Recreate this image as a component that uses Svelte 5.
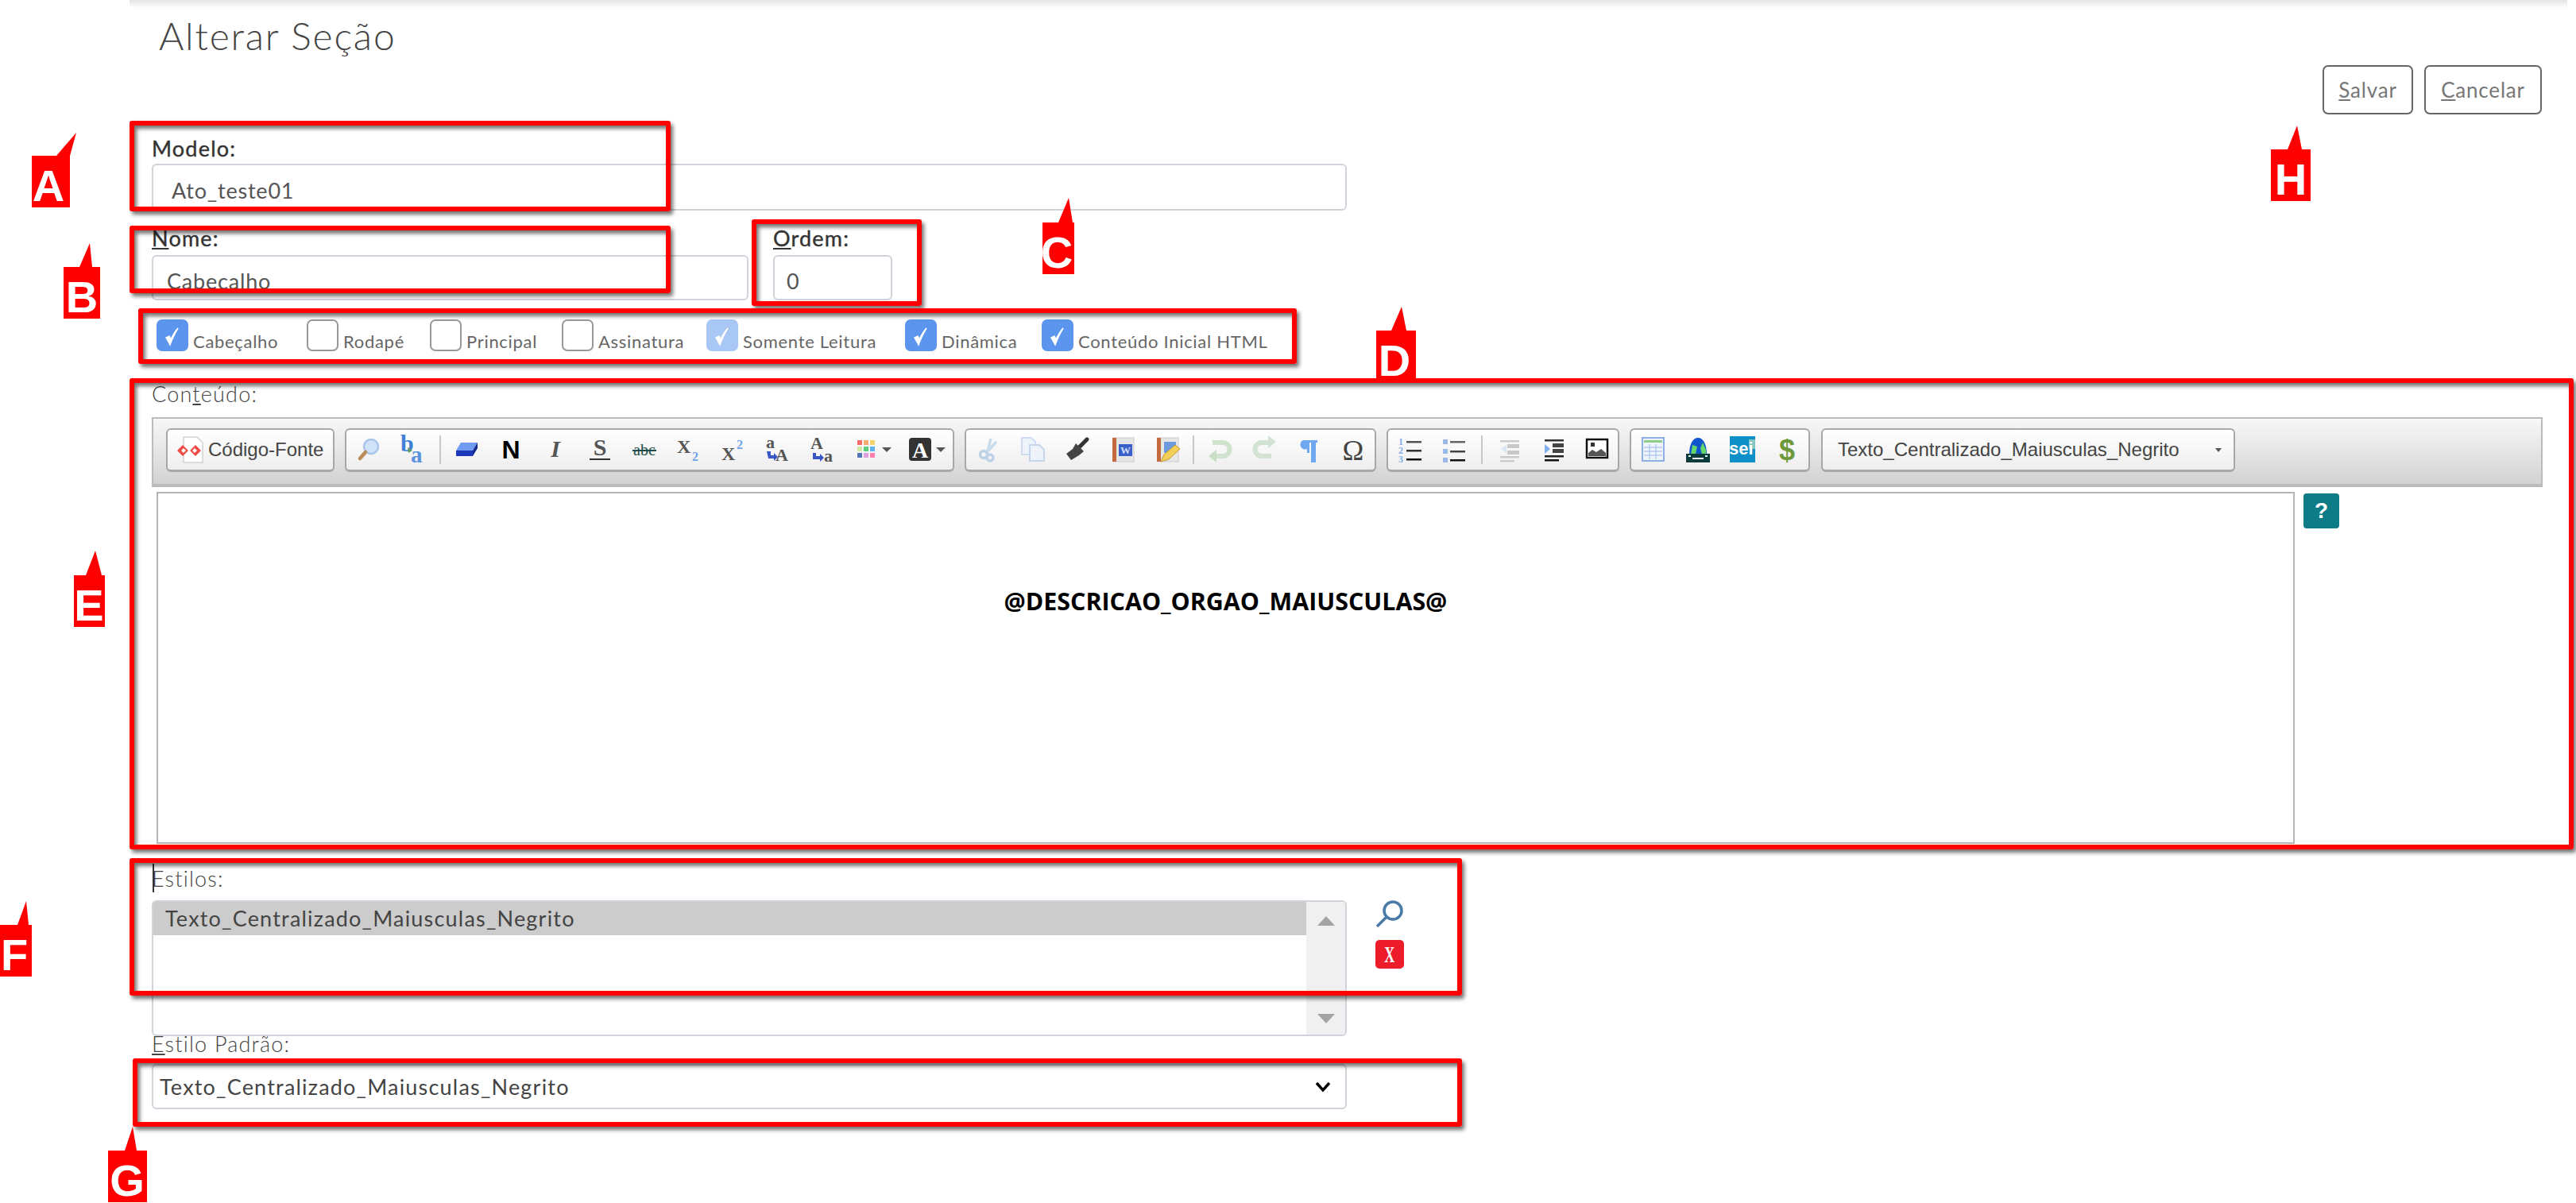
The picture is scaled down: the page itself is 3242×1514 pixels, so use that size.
<script>
  const serif = `font-family="Liberation Serif, serif"`
  const bold = `${serif} font-weight="700"`

  const ICONS = {
    search: `<circle cx="21" cy="14" r="9" fill="#cfe2f8" stroke="#a9c6ea" stroke-width="2.5"/><path d="M14 21 7 29" stroke="#b98d5a" stroke-width="4.5" stroke-linecap="round"/>`,
    replace: `<text x="2" y="20" font-size="30" fill="#3f7fd6" ${bold}>b</text><text x="15" y="34" font-size="29" fill="#5b93dd" ${bold}>a</text><path d="M11 15l6 4-5 3z" fill="#5e9e5a"/>`,
    eraser: `<path d="M11 9H32L26 19H5z" fill="#6f9cf0"/><path d="M5 19H26V26H5z" fill="#1c37b8"/><path d="M26 19 32 9V16L26 26z" fill="#12288f"/>`,
    bold: `<text x="18" y="29" text-anchor="middle" font-size="32" fill="#000" font-family="Liberation Sans, sans-serif" font-weight="700">N</text>`,
    italic: `<text x="18" y="27" text-anchor="middle" font-size="30" font-style="italic" fill="#555" ${bold}>I</text>`,
    underline: `<text x="18" y="25" text-anchor="middle" font-size="30" fill="#555" ${bold}>S</text><rect x="5" y="29" width="26" height="2" fill="#333"/>`,
    strike: `<text x="18" y="25" text-anchor="middle" font-size="20" fill="#1e4d4b" ${serif}>abc</text><rect x="3" y="18" width="30" height="2" fill="#1e4d4b"/>`,
    sub: `<text x="3" y="22" font-size="24" fill="#555" ${bold}>X</text><text x="22" y="32" font-size="16" fill="#6fa5e8" ${bold}>2</text>`,
    sup: `<text x="3" y="31" font-size="24" fill="#555" ${bold}>X</text><text x="22" y="17" font-size="16" fill="#6fa5e8" ${bold}>2</text>`,
    lower: `<text x="3" y="16" font-size="22" fill="#555" ${bold}>a</text><text x="15" y="32" font-size="22" fill="#555" ${bold}>A</text><path d="M4 20h5v5h4v-3l5 5-5 5v-3H6z" fill="#3a57c8"/>`,
    upper: `<text x="3" y="17" font-size="22" fill="#555" ${bold}>A</text><text x="20" y="33" font-size="22" fill="#555" ${bold}>a</text><path d="M6 22h4v4h5v-3l5 5-5 5v-3H6z" fill="#3a57c8"/>`,
    colors: `<g><rect x="7" y="6" width="6" height="6" fill="#f76a6a"/><rect x="15" y="6" width="6" height="6" fill="#f9aa72"/><rect x="23" y="6" width="6" height="6" fill="#f3d56b"/><rect x="7" y="14" width="6" height="6" fill="#cfe8a8"/><rect x="15" y="14" width="6" height="6" fill="#5ccf7a"/><rect x="23" y="14" width="6" height="6" fill="#5fb3ee"/><rect x="7" y="22" width="6" height="6" fill="#5577b5"/><rect x="15" y="22" width="6" height="6" fill="#dda0dd"/><rect x="23" y="22" width="6" height="6" fill="#ff7eb0"/></g>`,
    abox: `<rect x="4" y="3" width="28" height="29" rx="4" fill="#333"/><text x="18" y="28" text-anchor="middle" font-size="28" fill="#fff" ${bold}>A</text>`,
    scissors: `<path d="M21 4 17 20M28 8 17 20" stroke="#c9dcec" stroke-width="3.5" fill="none"/><circle cx="12" cy="24" r="4.5" fill="none" stroke="#bcd2e6" stroke-width="3.5"/><circle cx="20" cy="28" r="4" fill="none" stroke="#bcd2e6" stroke-width="3.5"/>`,
    copy: `<path d="M4 3h12l5 5v16H4z" fill="#eef3fa" stroke="#cfdcf0" stroke-width="2"/><path d="M14 12h12l6 6v14H14z" fill="#eef3fa" stroke="#c5d5ec" stroke-width="2"/>`,
    brush: `<path d="M21 14 30 5" stroke="#333" stroke-width="5" stroke-linecap="round"/><path d="M16 10 26 20 20 25 10 31 4 23 12 17z" fill="#444"/>`,
    word: `<rect x="7" y="3" width="26" height="30" fill="#e6e6e6" stroke="#ccc"/><rect x="6" y="3" width="5" height="30" fill="#c46a3c"/><rect x="14" y="11" width="17" height="15" fill="#3a5fc8"/><text x="22.5" y="23" text-anchor="middle" font-size="13" fill="#cfe0ff" ${bold}>W</text>`,
    wordedit: `<rect x="7" y="3" width="26" height="30" fill="#e6e6e6" stroke="#ccc"/><rect x="6" y="3" width="5" height="30" fill="#c46a3c"/><rect x="15" y="8" width="15" height="14" fill="#6d9be0"/><path d="M11 33 15 24 29 12 35 17 21 30z" fill="#f3cf57" stroke="#c99a33"/>`,
    undo: `<path d="M9 9h13a8 8 0 0 1 0 17H12" fill="none" stroke="#cfe3cf" stroke-width="6"/><path d="M14 18 4 26l10 8z" fill="#c7dec7"/>`,
    redo: `<path d="M27 9H15a8 8 0 0 0 0 17h12" fill="none" stroke="#d3e3d3" stroke-width="6"/><path d="M23 0l10 8-10 8z" fill="#d3e3d3"/>`,
    pilcrow: `<path d="M11 6h18v3h-2v25h-6V9h-2v13h-3v-5a5.5 5.5 0 0 1-5-11z" fill="#6fa8ef"/>`,
    omega: `<text x="18" y="31" text-anchor="middle" font-size="36" fill="#444" ${serif}>Ω</text>`,
    ol: `<text x="3" y="12" font-size="12" fill="#86aeea" ${bold}>1</text><text x="3" y="23" font-size="12" fill="#86aeea" ${bold}>2</text><text x="3" y="34" font-size="12" fill="#86aeea" ${bold}>3</text><rect x="13" y="7" width="19" height="2.5" fill="#555"/><rect x="13" y="18" width="19" height="2.5" fill="#333"/><rect x="13" y="29" width="19" height="2.5" fill="#111"/>`,
    ul: `<rect x="3" y="5" width="6" height="6" fill="#9bb8e8"/><rect x="3" y="17" width="6" height="6" fill="#9bb8e8"/><rect x="3" y="28" width="6" height="6" fill="#9bb8e8"/><rect x="12" y="7" width="19" height="2.5" fill="#666"/><rect x="12" y="19" width="19" height="2.5" fill="#444"/><rect x="12" y="30" width="19" height="2.5" fill="#111"/>`,
    outdent: `<rect x="8" y="6" width="24" height="2.5" fill="#ccc"/><rect x="17" y="11" width="15" height="5" fill="#c8c8c8"/><rect x="17" y="19" width="15" height="5" fill="#c8c8c8"/><rect x="8" y="26" width="24" height="2.5" fill="#ccc"/><rect x="8" y="31" width="18" height="2.5" fill="#ccc"/><path d="M16 12v10l-7-5z" fill="#dbe6f5"/>`,
    indent: `<rect x="8" y="5" width="24" height="2.5" fill="#333"/><rect x="18" y="10" width="14" height="5" fill="#444"/><rect x="18" y="17" width="14" height="5" fill="#444"/><rect x="8" y="25" width="24" height="2.5" fill="#222"/><rect x="8" y="30" width="18" height="2.5" fill="#111"/><path d="M8 11l7 6-7 6z" fill="#7fb0ec"/>`,
    image: `<rect x="5" y="5" width="26" height="23" fill="#fff" stroke="#111" stroke-width="2.5"/><rect x="10" y="9" width="5" height="5" fill="#333"/><path d="M7 26V22l5-4 5 3 6-4 6 5v4z" fill="#555"/>`,
    table: `<rect x="4" y="3" width="27" height="29" fill="#eef3fc" stroke="#8cb0e4" stroke-width="2"/><rect x="6" y="6" width="23" height="3" fill="#8ccf8a"/><path d="M6 15h23M6 20h23M6 25h23M13 11v19M21 11v19" stroke="#b5cbee" stroke-width="1.6"/>`,
    globe: `<path d="M7 24C7 10 12 3 18 3s11 7 11 21z" fill="#1155cc"/><path d="M11 12l6 2-2 9-6 1zM24 9l4 9v6h-5l-2-8z" fill="#63d86a"/><rect x="3" y="23" width="30" height="11" fill="#0d3b3b"/><rect x="11" y="28" width="14" height="2" fill="#e8f0f0"/><rect x="6" y="25" width="3" height="2" fill="#cfe"/><rect x="27" y="25" width="3" height="2" fill="#cfe"/>`,
    sei: `<rect x="2" y="1" width="32" height="33" fill="#0f8fc8"/><rect x="26" y="5" width="8" height="12" fill="#7fc7c0"/><text x="1" y="24" font-size="22" fill="#fff" font-family="Liberation Sans, sans-serif" font-weight="700">sei</text>`,
    dollar: `<text x="18" y="31" text-anchor="middle" font-size="36" fill="#6f9a3c" font-family="Liberation Sans, sans-serif" font-weight="700">$</text>`
  }

  const GROUPS = [
    { w: 212, items: [{ source: true }] },
    { w: 767, items: [{ i: 'search' }, { i: 'replace' }, { sep: true }, { i: 'eraser' }, { i: 'bold' }, { i: 'italic' }, { i: 'underline' }, { i: 'strike' }, { i: 'sub' }, { i: 'sup' }, { i: 'lower' }, { i: 'upper' }, { i: 'colors', drop: true }, { i: 'abox', drop: true }] },
    { w: 518, items: [{ i: 'scissors' }, { i: 'copy' }, { i: 'brush' }, { i: 'word' }, { i: 'wordedit' }, { sep: true }, { i: 'undo' }, { i: 'redo' }, { i: 'pilcrow' }, { i: 'omega' }] },
    { w: 293, items: [{ i: 'ol' }, { i: 'ul' }, { sep: true }, { i: 'outdent' }, { i: 'indent' }, { i: 'image' }] },
    { w: 227, items: [{ i: 'table' }, { i: 'globe' }, { i: 'sei' }, { i: 'dollar' }] }
  ]

  const CHECKS = [
    { label: 'Cabeçalho', w: 189, on: true },
    { label: 'Rodapé', w: 155 },
    { label: 'Principal', w: 166 },
    { label: 'Assinatura', w: 182 },
    { label: 'Somente Leitura', w: 250, on: true, off: true },
    { label: 'Dinâmica', w: 172, on: true },
    { label: 'Conteúdo Inicial HTML', w: 290, on: true }
  ]

  // marcações vermelhas por cima da tela
  const BOXES = [
    [163, 152, 681, 114],
    [163, 284, 681, 85],
    [946, 276, 214, 109],
    [174, 388, 1458, 70],
    [163, 476, 3076, 593],
    [163, 1080, 1677, 173],
    [167, 1332, 1673, 86]
  ]
  const TAGS = [
    { l: 'A', x: 40, y: 196, w: 48, tip: [96, 167], base: [71, 88], cx: 61 },
    { l: 'B', x: 80, y: 336, w: 46, tip: [113, 306], base: [100, 116], cx: 103 },
    { l: 'C', x: 1312, y: 280, w: 40, tip: [1345, 249], base: [1332, 1350], cx: 1330 },
    { l: 'D', x: 1732, y: 416, w: 50, tip: [1764, 386], base: [1751, 1770], cx: 1755 },
    { l: 'E', x: 93, y: 724, w: 39, tip: [120, 693], base: [108, 128], cx: 112 },
    { l: 'F', x: 0, y: 1164, w: 40, tip: [33, 1134], base: [22, 36], cx: 18 },
    { l: 'G', x: 136, y: 1448, w: 49, tip: [167, 1418], base: [157, 172], cx: 160 },
    { l: 'H', x: 2858, y: 188, w: 50, tip: [2891, 158], base: [2879, 2897], cx: 2883 }
  ]
</script>

<div class="page">
  <div class="topbar"></div>

  <h1>Alterar Seção</h1>
  <div class="actions">
    <button class="btn salvar"><u>S</u>alvar</button>
    <button class="btn cancelar"><u>C</u>ancelar</button>
  </div>

  <div class="form">
    <div class="field modelo">
      <label class="strong" for="modelo">Modelo:</label>
      <input id="modelo" class="wide" value="Ato_teste01" readonly />
    </div>

    <div class="row">
      <div class="field">
        <label class="strong" for="nome"><u>N</u>ome:</label>
        <input id="nome" class="nome" value="Cabeçalho" readonly />
      </div>
      <div class="field">
        <label class="strong" for="ordem"><u>O</u>rdem:</label>
        <input id="ordem" class="ordem" value="0" readonly />
      </div>
    </div>

    <div class="checks">
      {#each CHECKS as c}
        <div class="check" style="width:{c.w}px">
          <span class="box" class:on={c.on} class:off={c.off}>
            {#if c.on}
              <svg viewBox="0 0 40 40" width="40" height="40"><path d="M12 23l5 9c3-9 7-16 10-21-4 4-7 10-9 14l-2-4z" fill="#fff" stroke="#fff" stroke-width="1.5"/></svg>
            {/if}
          </span>
          <span class="check-label">{c.label}</span>
        </div>
      {/each}
    </div>

    <div class="lbl conteudo">Con<u>t</u>eúdo:</div>
    <div class="toolbar">
      {#each GROUPS as g}
        <div class="group" style="width:{g.w}px">
          {#each g.items as it}
            {#if it.source}
              <div class="source">
                <svg viewBox="0 0 36 36" width="36" height="36">
                  <path d="M8 2h17l7 7v25H8z" fill="#fff" stroke="#d2d2d2" stroke-width="1.5"/>
                  <path d="M7 12l7 7-7 7-7-7zM23 12l7 7-7 7-7-7z" fill="#ee4b45"/>
                  <path d="M8 16l3 3-3 3-3-3zM22 16l3 3-3 3-3-3z" fill="#fff"/>
                </svg>
                <span>Código-Fonte</span>
              </div>
            {:else if it.sep}
              <span class="sep"></span>
            {:else}
              <span class="tool" class:drop={it.drop}>
                <svg viewBox="0 0 36 36" width="36" height="36">{@html ICONS[it.i]}</svg>
                {#if it.drop}<span class="tri"></span>{/if}
              </span>
            {/if}
          {/each}
        </div>
      {/each}
      <div class="style-drop">
        <span>Texto_Centralizado_Maiusculas_Negrito</span>
        <span class="tri small"></span>
      </div>
    </div>

    <div class="editor-row">
      <div class="editor"><p>@DESCRICAO_ORGAO_MAIUSCULAS@</p></div>
      <span class="help">?</span>
    </div>

    <div class="lbl estilos"><span class="caret"></span>Estilos:</div>
    <div class="list-row">
      <div class="list">
        <div class="items"><div class="item">Texto_Centralizado_Maiusculas_Negrito</div></div>
        <div class="scroll">
          <span class="up"></span>
          <span class="down"></span>
        </div>
      </div>
      <div class="list-tools">
        <svg viewBox="0 0 36 36" width="36" height="36" fill="none" stroke="#4a7ba7">
          <circle cx="22" cy="13" r="11" stroke-width="3.5"/>
          <path d="M14 21 2 33" stroke-width="3.5"/>
        </svg>
        <span class="remove"><span>X</span></span>
      </div>
    </div>

    <div class="lbl padrao"><u>E</u>stilo Padrão:</div>
    <div class="select">
      <span>Texto_Centralizado_Maiusculas_Negrito</span>
      <svg viewBox="0 0 20 14" width="20" height="14" fill="none" stroke="#000" stroke-width="3.4"><path d="M2 2l8 9 8-9"/></svg>
    </div>
  </div>

  {#each BOXES as b}
    <div class="mark" style="left:{b[0]}px;top:{b[1]}px;width:{b[2]}px;height:{b[3]}px"></div>
  {/each}

  <svg class="tags" viewBox="0 0 3242 1514" width="3242" height="1514">
    {#each TAGS as t}
      <rect x={t.x} y={t.y} width={t.w} height="65" fill="#f00"/>
      <polygon points="{t.base[0]},{t.y} {t.tip[0]},{t.tip[1]} {t.base[1]},{t.y}" fill="#f00"/>
      <text x={t.cx} y={t.y + 57} text-anchor="middle" class="tag-letter">{t.l}</text>
    {/each}
  </svg>
</div>

<style>
  :global(body) { margin: 0; background: #fff; }

  .page {
    position: relative; width: 3242px; height: 1514px; overflow: hidden;
    background: #fff; color: #555;
    font-family: Lato, "Open Sans", sans-serif;
  }

  .topbar {
    height: 10px; margin-left: 163px; margin-right: 11px;
    background: linear-gradient(#e4e4e4, #fff);
  }

  h1 {
    margin: 6px 0 0 200px; height: 58px;
    font-size: 48px; line-height: 58px; font-weight: 300; color: #444;
    letter-spacing: 1.8px;
  }

  .actions {
    display: flex; justify-content: flex-end; gap: 14px;
    margin: 8px 43px 0 0;
  }
  .btn {
    height: 62px; background: #fff; color: #777;
    border: 2px solid #666; border-radius: 7px;
    font: 400 26px/1 Lato, sans-serif; letter-spacing: 0.8px; padding: 0;
  }
  .salvar { width: 114px; }
  .cancelar { width: 148px; }

  .form { margin-left: 191px; }

  .field { display: flex; flex-direction: column; }
  .modelo { margin-top: 28px; }
  .modelo label { margin-bottom: 4px; }

  .strong, .lbl {
    display: block; height: 30px;
    font-size: 27px; line-height: 30px; letter-spacing: 1.2px;
  }
  .strong { color: #333; -webkit-text-stroke: 0.4px #333; }
  .lbl { font-weight: 300; color: #444; position: relative; }

  input {
    box-sizing: border-box; background: #fff; color: #555;
    border: 2px solid #ced4da; border-radius: 6px; outline: none;
    font: 400 27px Lato, sans-serif; letter-spacing: 0.8px;
  }
  .wide { width: 1504px; height: 59px; padding: 8px 0 0 23px; }

  .row { display: flex; gap: 31px; margin-top: 20px; }
  .row label { margin-bottom: 6px; }
  .nome { width: 751px; height: 57px; padding: 8px 0 0 17px; }
  .ordem { width: 150px; height: 57px; padding: 8px 0 0 15px; }

  .checks { display: flex; margin: 24px 0 0 6px; height: 40px; }
  .check { display: flex; gap: 6px; flex: none; }
  .box {
    box-sizing: border-box; width: 40px; height: 40px; flex: none;
    border: 2px solid #999; border-radius: 7px; background: #fff;
  }
  .box svg { display: block; margin: -2px; }
  .box.on { background: #5b95ee; border-color: #5b95ee; }
  .box.off { background: #a9c7f5; border-color: #a9c7f5; }
  .check-label {
    align-self: flex-end; font-size: 22px; line-height: 26px; color: #666;
    letter-spacing: 0.7px; white-space: nowrap; margin-bottom: -1px;
  }

  .conteudo { margin-top: 39px; }

  .toolbar {
    box-sizing: border-box; display: flex; align-items: flex-start; gap: 13px;
    width: 3009px; height: 88px; margin-top: 14px; padding: 12px 0 0 16px;
    background: linear-gradient(#f7f7f7, #d2d3d1);
    border: 2px solid #bbb; border-bottom-width: 4px;
  }
  .group {
    box-sizing: border-box; display: flex; align-items: center; flex: none;
    height: 55px; border: 2px solid #a8a8a8; border-bottom-width: 3px; border-radius: 6px;
    background: linear-gradient(#fff, #eee);
  }
  .source {
    display: flex; align-items: center; gap: 3px; margin-left: 12px;
    font: 400 24px "Liberation Sans", sans-serif; color: #444;
  }
  .tool {
    display: flex; align-items: center; justify-content: center; gap: 2px;
    width: 56px; flex: none;
  }
  .tool svg { overflow: visible; }
  .tool.drop { width: 68px; }
  .sep { width: 2px; height: 36px; margin: 0 4px 0 5px; background: #c8c8c8; flex: none; }
  .tri {
    width: 0; height: 0;
    border-left: 6px solid transparent; border-right: 6px solid transparent;
    border-top: 6px solid #555;
  }
  .tri.small { border-left-width: 4px; border-right-width: 4px; border-top-width: 5px; }
  .style-drop {
    box-sizing: border-box; display: flex; align-items: center; justify-content: space-between;
    width: 521px; height: 55px; margin-left: 1px; padding: 0 15px 0 19px; flex: none;
    border: 2px solid #a8a8a8; border-bottom-width: 3px; border-radius: 6px;
    background: linear-gradient(#fff, #eee);
    font: 400 24px "Liberation Sans", sans-serif; color: #444;
  }

  .editor-row { display: flex; gap: 11px; margin: 6px 0 0 6px; }
  .editor {
    box-sizing: border-box; width: 2691px; height: 443px;
    border: 2px solid #b5b5b5; background: #fff;
  }
  .editor p {
    margin: 116px 0 0; text-align: center;
    font: 700 30.4px/40px "Open Sans", sans-serif; color: #000;
  }
  .help {
    width: 45px; height: 44px; margin-top: 2px; border-radius: 4px;
    background: #0e7c86; color: #fff; text-align: center;
    font: 700 28px/44px "Liberation Sans", sans-serif;
  }

  .estilos { margin-top: 29px; }
  .caret {
    position: absolute; left: 1px; top: -4px;
    width: 2px; height: 36px; background: #333;
  }

  .list-row { display: flex; gap: 36px; margin-top: 12px; }
  .list {
    box-sizing: border-box; display: flex; width: 1504px; height: 171px;
    border: 2px solid #ced4da; border-radius: 6px; overflow: hidden;
  }
  .items { flex: 1; }
  .item {
    height: 42px; background: #ccc; color: #444; padding-left: 15px;
    font-size: 27px; line-height: 42px; letter-spacing: 1.2px;
  }
  .scroll {
    display: flex; flex-direction: column; justify-content: space-between;
    align-items: center; width: 49px; padding: 18px 0 14px; background: #f0f0f0;
  }
  .up, .down {
    width: 0; height: 0;
    border-left: 11px solid transparent; border-right: 11px solid transparent;
  }
  .up { border-bottom: 12px solid #a3a3a3; }
  .down { border-top: 12px solid #a3a3a3; }

  .list-tools { display: flex; flex-direction: column; gap: 14px; width: 36px; }
  .remove {
    width: 36px; height: 36px; border-radius: 5px;
    background: #ed1c2a; color: #fff; text-align: center;
    font: 700 30px/36px "Liberation Serif", serif;
  }
  .remove span { display: inline-block; transform: scaleX(0.6); }

  .padrao { margin-top: -5px; }
  .select {
    box-sizing: border-box; display: flex; align-items: center; justify-content: space-between;
    width: 1504px; height: 57px; margin-top: 10px; padding: 0 18px 0 8px;
    border: 2px solid #ced4da; border-radius: 6px;
    font-size: 27px; letter-spacing: 1.2px; color: #444;
  }

  .mark {
    position: absolute; box-sizing: border-box;
    border: 6px solid #f00; border-radius: 3px;
    box-shadow: 3px 4px 5px rgba(0, 0, 0, 0.55), inset 3px 4px 5px rgba(0, 0, 0, 0.55);
    pointer-events: none;
  }

  .tags { position: absolute; left: 0; top: 0; pointer-events: none; }
  .tag-letter {
    fill: #fff; font: 700 56px "Liberation Sans", sans-serif;
  }
</style>
